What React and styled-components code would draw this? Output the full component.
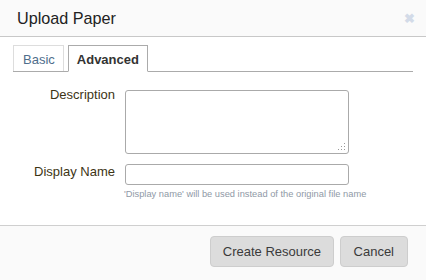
import React from "react";
import styled, { createGlobalStyle } from "styled-components";

const Global = createGlobalStyle`
  html, body { margin: 0; padding: 0; background: #fff; }
  body { font-family: "Liberation Sans", Arial, sans-serif; }
  * { box-sizing: border-box; }
`;

const Dialog = styled.div`
  width: 426px;
  height: 280px;
  display: flex;
  flex-direction: column;
  background: #fff;
`;

const Header = styled.div`
  height: 37px;
  flex: none;
  background: #fafafa;
  border-bottom: 1px solid #c8c8c8;
  display: flex;
  align-items: center;
  justify-content: space-between;
  padding: 0 11px 0 17px;
`;

const Title = styled.h1`
  margin: 0;
  font-size: 16.2px;
  font-weight: normal;
  color: #222;
  padding-top: 1px;
`;

const Close = styled.span`
  font-size: 13px;
  font-weight: bold;
  color: #d3dbe8;
  line-height: 1;
  margin-top: 1px;
`;

const Body = styled.div`
  flex: 1;
  padding: 8px 13px 0;
`;

const TabBar = styled.div`
  display: flex;
  gap: 4px;
  border-bottom: 1px solid #ababab;
  height: 27px;
  align-items: flex-end;
`;

const Tab = styled.div`
  padding: 1px 8px 0 ${p => (p.$active ? "8px" : "9px")};
  display: flex;
  align-items: center;
  font-size: 13px;
  font-weight: ${p => (p.$active ? "bold" : "normal")};
  color: ${p => (p.$active ? "#333" : "#4f6e8c")};
  background: #fff;
  border: 1px solid ${p => (p.$active ? "#ababab" : "#ddd")};
  border-bottom: ${p => (p.$active ? "1px solid #fff" : "none")};
  margin-bottom: ${p => (p.$active ? "-1px" : "0")};
  height: ${p => (p.$active ? "27px" : "26px")};
`;

const Form = styled.div`
  display: grid;
  grid-template-columns: 102px 224px;
  column-gap: 10px;
  row-gap: 10px;
  margin-top: 18px;
`;

const Label = styled.label`
  font-size: 13px;
  color: #3d3414;
  text-align: right;
  margin-top: ${p => p.$mt || 0}px;
`;

const Field = styled.div`
  display: flex;
  flex-direction: column;
`;

const TextArea = styled.div`
  position: relative;
  height: 64px;
  border: 1px solid #aaa;
  border-radius: 3px;
  background: #fff;
`;

const Grip = styled.svg`
  position: absolute;
  right: 2px;
  bottom: 2px;
`;

const Input = styled.div`
  height: 21px;
  border: 1px solid #aaa;
  border-radius: 3px;
  background: #fff;
`;

const Help = styled.div`
  font-size: 9.3px;
  color: #8f99a6;
  margin-top: 4px;
  margin-left: -1px;
  white-space: nowrap;
`;

const Footer = styled.div`
  height: 55px;
  flex: none;
  background: #fafafa;
  border-top: 1px solid #cfcfcf;
  display: flex;
  justify-content: flex-end;
  align-items: flex-start;
  gap: 6px;
  padding: 10px 18px 0 0;
`;

const Button = styled.button`
  height: 31px;
  padding: 0 ${p => p.$px || 13}px;
  font-family: "Liberation Sans", Arial, sans-serif;
  font-size: 13px;
  color: #3a3a3a;
  background: #dcdcdc;
  border: 1px solid #cdcdcd;
  border-radius: 4px;
`;

export default function App() {
  return (
    <>
      <Global />
      <Dialog>
        <Header>
          <Title>Upload Paper</Title>
          <Close>✖</Close>
        </Header>
        <Body>
          <TabBar>
            <Tab>Basic</Tab>
            <Tab $active>Advanced</Tab>
          </TabBar>
          <Form>
            <Label $mt={-3}>Description</Label>
            <Field>
              <TextArea>
                <Grip width="8" height="8" viewBox="0 0 8 8">
                  {[[6, 0], [6, 3], [6, 6], [3, 3], [3, 6], [0, 6]].map(([x, y], i) => (
                    <rect key={i} x={x} y={y} width="1" height="1" fill="#999" />
                  ))}
                </Grip>
              </TextArea>
            </Field>
            <Label $mt={0}>Display Name</Label>
            <Field>
              <Input />
              <Help>'Display name' will be used instead of the original file name</Help>
            </Field>
          </Form>
        </Body>
        <Footer>
          <Button $px={11.5}>Create Resource</Button>
          <Button $px={13}>Cancel</Button>
        </Footer>
      </Dialog>
    </>
  );
}
